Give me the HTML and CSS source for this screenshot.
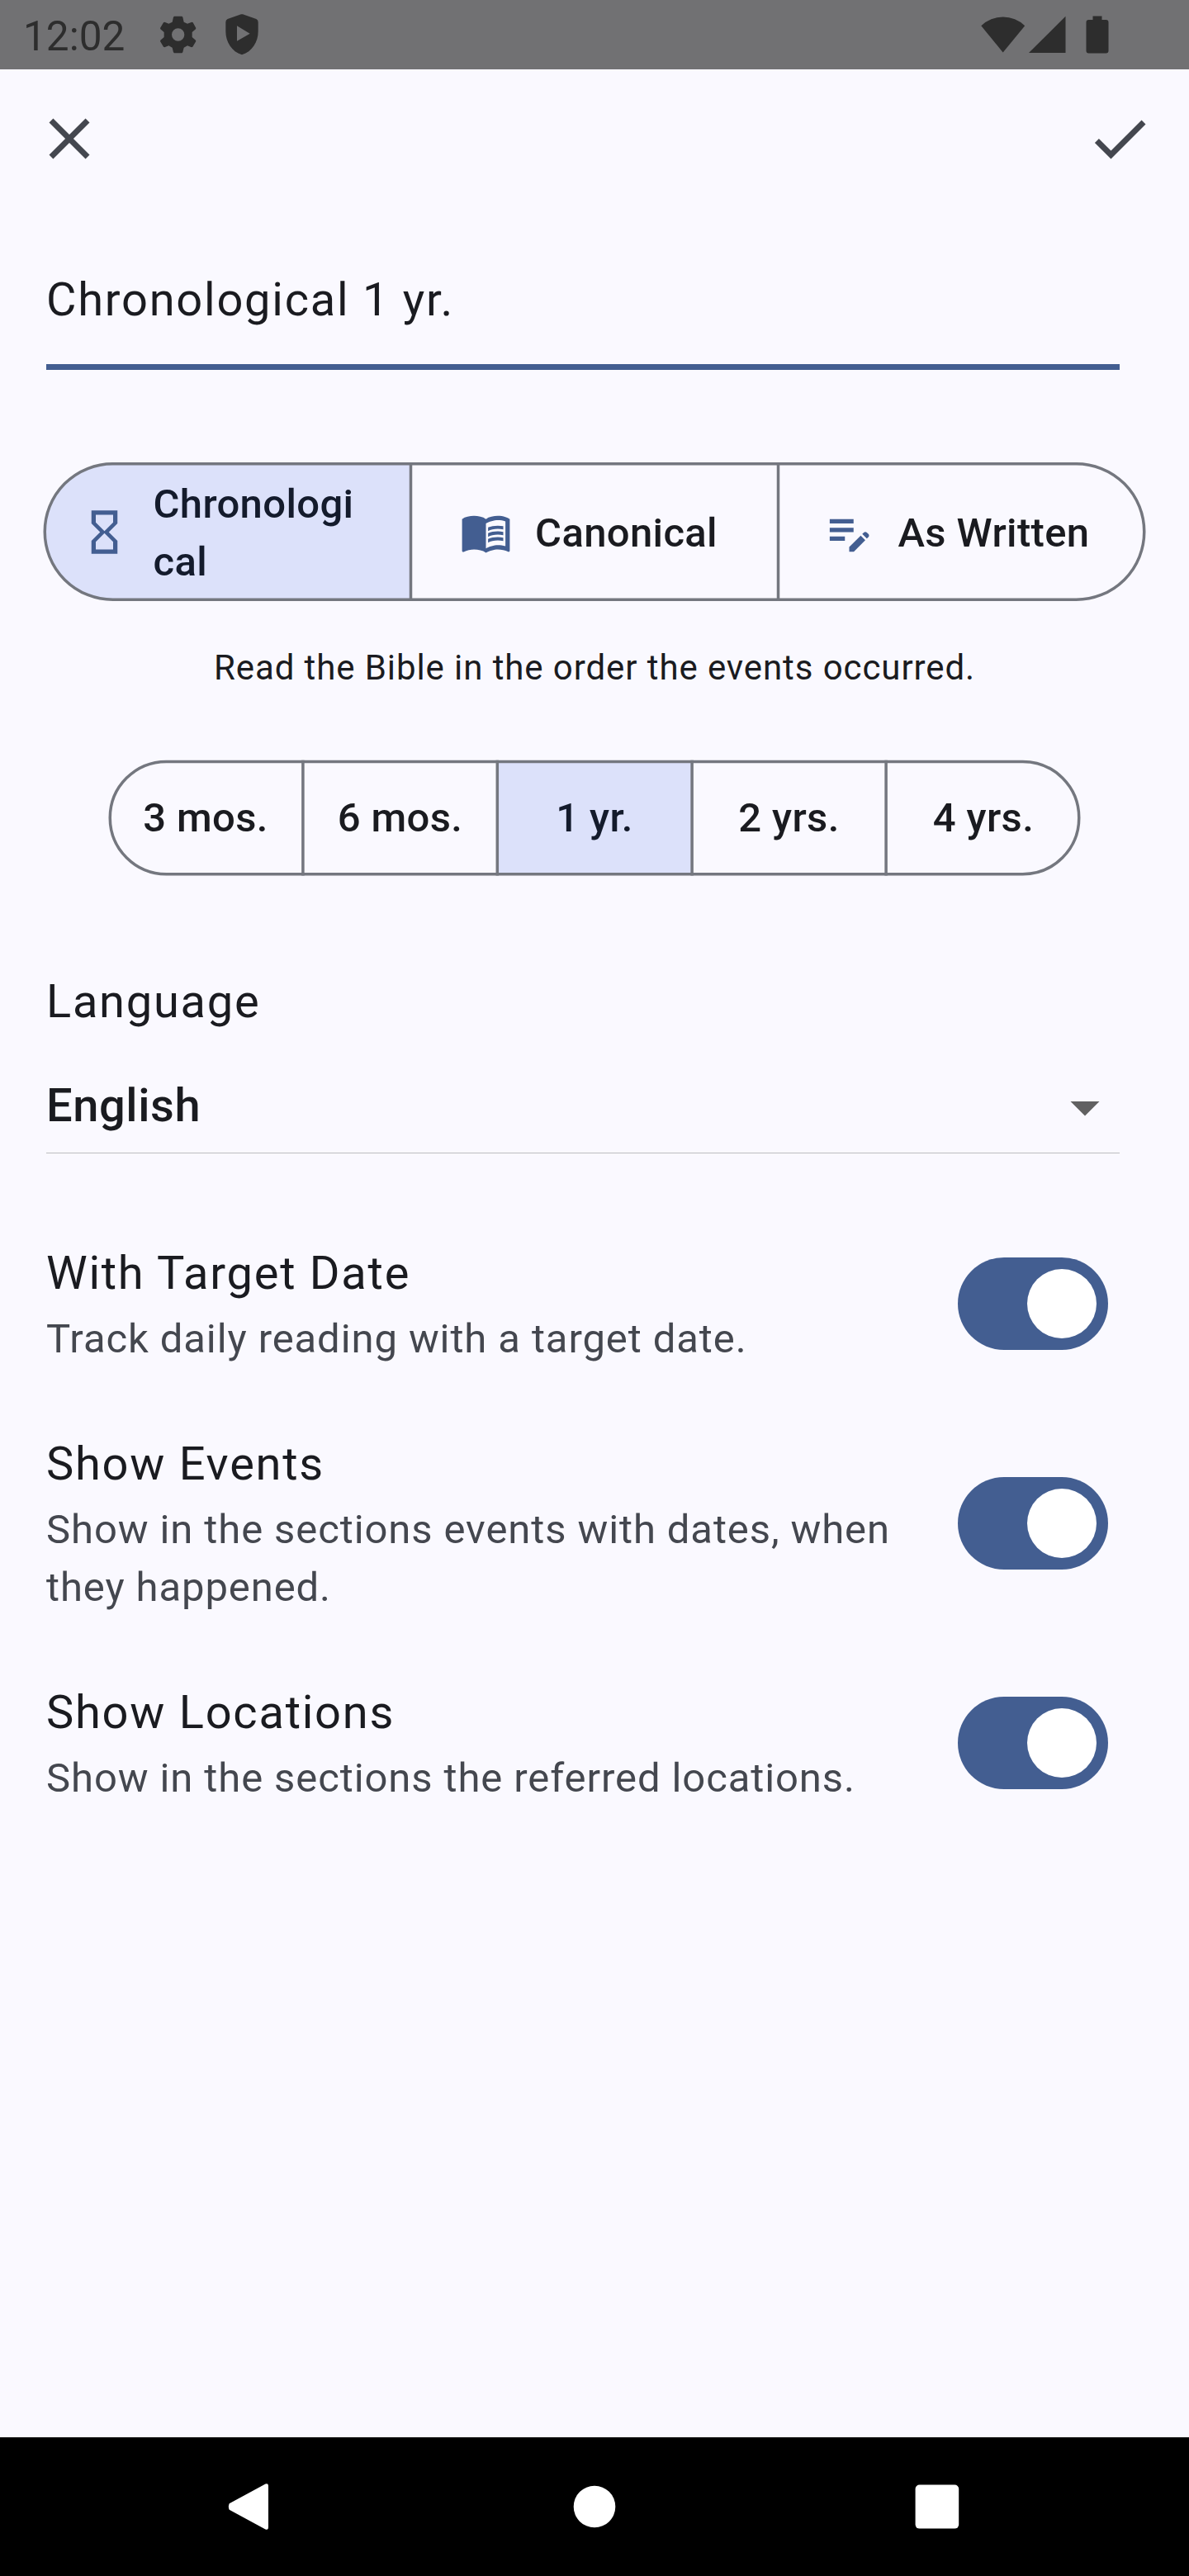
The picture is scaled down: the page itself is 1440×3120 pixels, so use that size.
FILE: index.html
```
<!DOCTYPE html>
<html lang="en">
<head>
<meta charset="utf-8">
<title>Reading plan</title>
<link rel="stylesheet" href="styles.css">
</head>
<body>
<div class="screen">
  <header class="status-bar">
    <div class="status-left">
      <span class="clock">12:02</span>
      <svg class="status-gear" width="44" height="46" viewBox="581 58 132 138" aria-hidden="true"><path fill-rule="evenodd" d="M632 60H660L663 63 667 81 680 87 696 81 700 83 711 103 710 107 697 118V136L710 147 711 151 699 171 695 173 680 167 667 174 663 191 660 194H632L629 191 625 174 612 167 597 173 593 171 581 151 582 147 595 136V118L582 107 581 103 593 83 597 81 612 87 625 81 629 63ZM646 104a23 23 0 1 0 0 46a23 23 0 1 0 0-46Z"/></svg>
      <svg class="status-shield" width="40" height="50" viewBox="817 53 120 150" aria-hidden="true"><path fill-rule="evenodd" d="M874 54Q877 53 880 54L929 71Q936 74 936 82V116C936 154 914 190 877 201C840 190 818 154 818 116V82Q818 74 825 71ZM859 96V151L906 124Z"/></svg>
    </div>
    <div class="status-right">
      <svg width="54" height="46" viewBox="0 0 54 46" aria-hidden="true"><path d="M.3 12.3A38 38 0 0 1 53.2 12.3L26.7 44.5Z"/></svg>
      <svg class="status-cell" width="45" height="46" viewBox="0 0 45 46" aria-hidden="true"><path d="M0 45H44.5V.8Z"/></svg>
      <svg class="status-battery" width="28" height="46" viewBox="0 0 28 46" aria-hidden="true"><path d="M8.5.5H19.5V5H24.5Q27.5 5 27.5 8V42.5Q27.5 45.5 24.5 45.5H3.5Q.5 45.5 .5 42.5V8Q.5 5 3.5 5H8.5Z"/></svg>
    </div>
  </header>

  <nav class="app-bar">
    <svg width="84" height="84" viewBox="0 0 24 24" role="img" aria-label="Close"><path d="M19 6.41 17.59 5 12 10.59 6.41 5 5 6.41 10.59 12 5 17.59 6.41 19 12 13.41 17.59 19 19 17.59 13.41 12z"/></svg>
    <svg width="84" height="84" viewBox="0 0 24 24" role="img" aria-label="Save"><path d="M9 16.17 4.83 12l-1.42 1.41L9 19 21 7l-1.41-1.41z"/></svg>
  </nav>

  <main class="form">
    <div class="name-field">Chronological 1 yr.</div>

    <div class="segmented order">
      <svg class="frame" width="1336" height="168" viewBox="0 0 1336 168" aria-hidden="true">
        <path class="selected" d="M445.5 1.75H84.5A82.25 82.25 0 0 0 84.5 166.25H445.5Z"/>
        <rect x="2.25" y="1.75" width="1331.5" height="164.5" rx="82.25"/>
        <path d="M445.5 1.75V166.25M890.5 1.75V166.25"/>
      </svg>
      <div class="segment on">
        <svg width="63" height="63" viewBox="0 0 24 24" aria-hidden="true"><path d="M6 2v6h.01L6 8.01 10 12l-4 4 .01.01H6V22h12v-5.99h-.01L18 16l-4-4 4-3.99-.01-.01H18V2H6zm10 14.5V20H8v-3.5l4-4 4 4zm-4-5-4-4V4h8v3.5l-4 4z"/></svg>
        <span>Chronological</span>
      </div>
      <div class="segment">
        <svg width="63" height="63" viewBox="0 0 24 24" aria-hidden="true"><path d="M21 5c-1.11-.35-2.33-.5-3.5-.5-1.95 0-4.05.4-5.5 1.5-1.45-1.1-3.55-1.5-5.5-1.5S2.45 4.9 1 6v14.65c0 .25.25.5.5.5.1 0 .15-.05.25-.05C3.1 20.45 5.05 20 6.5 20c1.95 0 4.05.4 5.5 1.5 1.35-.85 3.8-1.5 5.5-1.5 1.65 0 3.35.3 4.75 1.05.1.05.15.05.25.05.25 0 .5-.25.5-.5V6c-.6-.45-1.25-.75-2-1zm0 13.5c-1.1-.35-2.3-.5-3.5-.5-1.7 0-4.15.65-5.5 1.5V8c1.35-.85 3.8-1.5 5.5-1.5 1.2 0 2.4.15 3.5.5v11.5z"/><path d="M17.5 10.5c.88 0 1.73.09 2.5.26V9.24c-.79-.15-1.64-.24-2.5-.24-1.7 0-3.24.29-4.5.83v1.66c1.13-.64 2.7-.99 4.5-.99zM13 12.49v1.66c1.13-.64 2.7-.99 4.5-.99.88 0 1.73.09 2.5.26V11.9c-.79-.15-1.64-.24-2.5-.24-1.7 0-3.24.3-4.5.83zM17.5 14.33c-1.7 0-3.24.29-4.5.83v1.66c1.13-.64 2.7-.99 4.5-.99.88 0 1.73.09 2.5.26v-1.52c-.79-.16-1.64-.24-2.5-.24z"/></svg>
        <span>Canonical</span>
      </div>
      <div class="segment">
        <svg width="63" height="63" viewBox="0 0 24 24" aria-hidden="true"><path d="M3 10h11v2H3v-2zm0-2h11V6H3v2zm0 8h7v-2H3v2zm15.01-3.13.71-.71c.39-.39 1.02-.39 1.41 0l.71.71c.39.39.39 1.02 0 1.41l-.71.71-2.12-2.12zm-.71.71-5.3 5.3V21h2.12l5.3-5.3-2.12-2.12z"/></svg>
        <span>As Written</span>
      </div>
    </div>

    <p class="hint">Read the Bible in the order the events occurred.</p>

    <div class="segmented duration">
      <svg class="frame" width="1178" height="141" viewBox="0 0 1178 141" aria-hidden="true">
        <path class="selected" d="M471.3 2.4H707.1V138.7H471.3Z"/>
        <rect x="2.25" y="2.4" width="1173.5" height="136.3" rx="68.15"/>
        <path d="M235.9 .7V140.5M471.3 .7V140.5M707.1 .7V140.5M942.1 .7V140.5"/>
      </svg>
      <div class="segment">3 mos.</div>
      <div class="segment">6 mos.</div>
      <div class="segment on">1 yr.</div>
      <div class="segment">2 yrs.</div>
      <div class="segment">4 yrs.</div>
    </div>

    <h2 class="language-label">Language</h2>
    <div class="dropdown">
      <span>English</span>
      <svg width="84" height="84" viewBox="0 0 24 24" aria-hidden="true"><path d="m7 10 5 5 5-5z"/></svg>
    </div>

    <ul class="options">
      <li>
        <div class="option-text"><h3>With Target Date</h3><p>Track daily reading with a target date.</p></div>
        <div class="switch"><span class="thumb"></span></div>
      </li>
      <li>
        <div class="option-text"><h3>Show Events</h3><p>Show in the sections events with dates, when they happened.</p></div>
        <div class="switch"><span class="thumb"></span></div>
      </li>
      <li>
        <div class="option-text"><h3>Show Locations</h3><p>Show in the sections the referred locations.</p></div>
        <div class="switch"><span class="thumb"></span></div>
      </li>
    </ul>
  </main>

  <footer class="nav-bar">
    <svg width="84" height="84" viewBox="0 0 84 84" role="img" aria-label="Back"><path d="M15.7 38.2Q14 42 15.7 45.8L59.5 69.4Q63 71 63 66.5V17.5Q63 13 59.5 14.6Z"/></svg>
    <svg width="84" height="84" viewBox="0 0 84 84" role="img" aria-label="Home"><circle cx="42" cy="42" r="25.3"/></svg>
    <svg width="84" height="84" viewBox="0 0 84 84" role="img" aria-label="Recents"><rect x="14.6" y="15.6" width="52.6" height="53" rx="5"/></svg>
  </footer>
</div>
</body>
</html>
```
FILE: styles.css
```
* {
  box-sizing: border-box;
  margin: 0;
  padding: 0;
}

body {
  background: #faf9ff;
  color: #1a1b20;
  font-family: Roboto, "Noto Sans", sans-serif;
}

svg {
  display: block;
  flex: none;
}

.screen {
  display: flex;
  flex-direction: column;
  width: 1440px;
  height: 3120px;
  overflow: hidden;
}

.status-bar {
  display: flex;
  justify-content: space-between;
  height: 84px;
  padding: 0 97px 0 28px;
  background: #717173;
  color: #2d2d2d;
  fill: #2d2d2d;
}

.status-left,
.status-right {
  display: flex;
  align-items: center;
}

.clock {
  width: 166px;
  font-size: 49.5px;
  line-height: 84px;
  padding-top: 3px;
}

.status-shield {
  margin-left: 35px;
}

.status-cell {
  margin-left: 4px;
}

.status-battery {
  margin-left: 24px;
}

.app-bar {
  display: flex;
  align-items: center;
  justify-content: space-between;
  height: 168px;
  padding: 0 42px;
  fill: #44474f;
}

.form {
  flex: 1;
}

.name-field {
  margin: 0 84px 0 56px;
  padding: 69px 0 36px;
  border-bottom: 7px solid #435e91;
  font-size: 56px;
  line-height: 84px;
  letter-spacing: 1.75px;
}

.segmented {
  position: relative;
  display: grid;
  margin: 0 auto;
  font-size: 49px;
  font-weight: 500;
  line-height: 70px;
  letter-spacing: 0.35px;
}

.frame {
  position: absolute;
  inset: 0;
  z-index: -1;
  fill: none;
  stroke: #74777f;
  stroke-width: 3.5px;
}

.frame .selected {
  fill: #dce1fa;
  stroke: none;
}

.segment {
  display: flex;
  align-items: center;
}

.segment.on {
  color: #141b2c;
}

.order {
  grid-template-columns: repeat(3, 445px);
  justify-content: center;
  width: 1336px;
  height: 168px;
  margin-top: 112px;
}

.order .segment {
  justify-content: center;
  gap: 28px;
  padding: 4px 56px 0 42px;
}

.order .segment svg {
  margin-top: -4px;
  fill: #435e91;
}

.order .segment span {
  overflow-wrap: anywhere;
}

.hint {
  margin-top: 53px;
  text-align: center;
  font-size: 42px;
  line-height: 56px;
  letter-spacing: 0.91px;
}

.duration {
  grid-template-columns: repeat(5, 235.5px);
  justify-content: center;
  width: 1178px;
  height: 141px;
  margin-top: 83px;
}

.duration .segment {
  justify-content: center;
}

.language-label {
  margin: 110px 56px 0;
  font-size: 56px;
  font-weight: 400;
  line-height: 84px;
  letter-spacing: 1.75px;
}

.dropdown {
  display: flex;
  align-items: center;
  justify-content: space-between;
  margin: 42px 84px 0 56px;
  padding-bottom: 15px;
  border-bottom: 1px solid #bdbdbf;
  font-size: 56px;
  font-weight: 500;
  line-height: 84px;
  letter-spacing: 0.6px;
}

.dropdown svg {
  fill: #616161;
  margin: 2px 0 -2px;
}

.options {
  margin-top: 49px;
  list-style: none;
}

.options li {
  display: flex;
  align-items: center;
  gap: 42px;
  height: 266px;
  padding: 0 98px 0 56px;
}

.option-text {
  flex: 1;
  padding-bottom: 2px;
}

.option-text h3 {
  font-size: 56px;
  font-weight: 400;
  line-height: 84px;
  letter-spacing: 1.75px;
}

.option-text p {
  margin-top: 3px;
  color: #44474f;
  font-size: 49px;
  line-height: 70px;
  letter-spacing: 0.9px;
}

.switch {
  display: flex;
  align-items: center;
  justify-content: flex-end;
  width: 182px;
  height: 112px;
  padding-right: 14px;
  border-radius: 56px;
  background: #435e91;
}

.thumb {
  width: 84px;
  height: 84px;
  border-radius: 50%;
  background: #fff;
}

.nav-bar {
  display: flex;
  align-items: center;
  justify-content: center;
  gap: 332px;
  height: 168px;
  background: #000;
  fill: #fff;
}
```
